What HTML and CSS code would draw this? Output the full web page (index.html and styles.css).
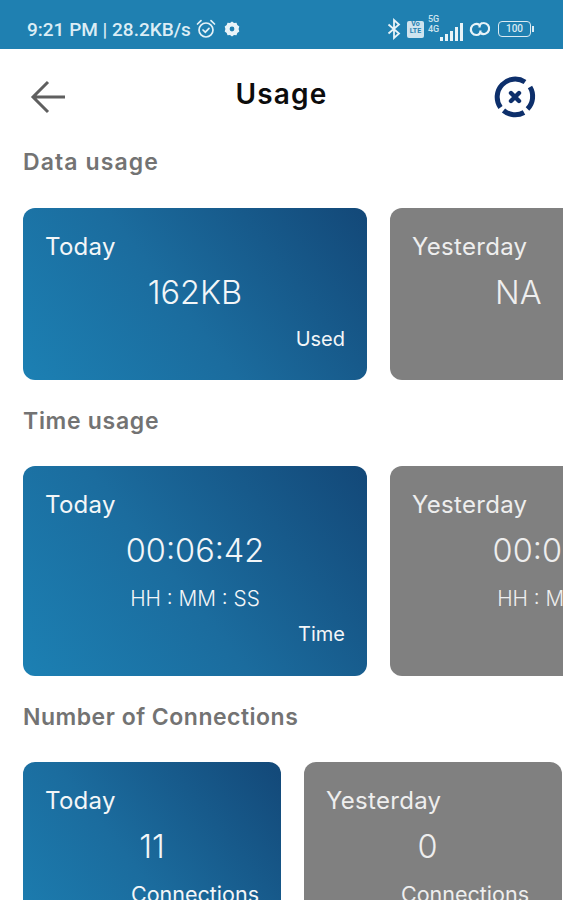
FILE: index.html
```html
<!DOCTYPE html>
<html lang="en">
<head>
<meta charset="utf-8">
<title>Usage</title>
<link rel="stylesheet" href="styles.css">
</head>
<body>
<div class="screen">
  <div class="status">
    <div class="status-left">
      <span class="status-text">9:21 PM | 28.2KB/s</span>
      <svg class="ic-alarm" width="22" height="22" viewBox="0 0 22 22" fill="none" stroke="#e4f1f7" stroke-width="1.7"><circle cx="11" cy="12" r="7"/><path d="M2.500 6 6 2.600M19.500 6 16 2.600M8 12l2.300 2.200L14 10.400" stroke-linecap="round"/></svg>
      <svg class="ic-gear" width="16" height="16" viewBox="0 0 16 16"><path fill="#e8f3f8" fill-rule="evenodd" d="M8 .6 10 2l2.500-.2.8 2.300 2 1.500L14.600 8l.7 2.400-2 1.500-.8 2.300L10 14 8 15.400 6 14l-2.500.2-.8-2.300-2-1.500L1.400 8 .7 5.600l2-1.500.8-2.300L6 2zM8 5.600a2.400 2.400 0 1 0 0 4.800 2.400 2.400 0 0 0 0-4.800z"/></svg>
    </div>
    <div class="status-right">
      <svg width="14" height="22" viewBox="0 0 14 22" fill="none" stroke="#e8f3f8" stroke-width="1.8"><path d="M1.500 6.500 12 15.500 7 20V2l5 4.500L1.500 15.500"/></svg>
      <span class="volte">Vo<br>LTE</span>
      <div class="signal">
        <span class="net">5G<br>4G</span>
        <i class="b1"></i><i class="b2"></i><i class="b3"></i><i class="b4"></i><i class="b5"></i>
      </div>
      <svg width="22" height="18" viewBox="0 0 22 18" fill="none" stroke="#e8f3f8" stroke-width="2.200"><path d="M10.500 5A5.500 5.500 0 1 0 7.500 15c2.500 0 4-2 4-4.500"/><path d="M11.500 13A5.500 5.500 0 1 0 14.500 3c-2.500 0-4 2-4 4.500"/></svg>
      <div class="battery"><span class="battery-body">100</span><span class="battery-tip"></span></div>
    </div>
  </div>

  <header class="topbar">
    <svg class="back" width="36" height="34" viewBox="0 0 36 34" fill="none" stroke="#5f5f5f" stroke-width="3"><path d="M35 17H3M18 2 3 17l15 15"/></svg>
    <h1 class="title">Usage</h1>
    <svg class="logo" width="42" height="42" viewBox="0 0 42 42" fill="none" stroke="#0d2f6b"><path d="M31 6A18 18 0 0 0 6.500 31.500" stroke-width="5"/><path d="M9.500 34.500A18 18 0 0 0 30 36.500" stroke-width="5"/><path d="M33.500 33A18 18 0 0 0 36 11" stroke-width="5"/><path d="M17 17l8 8M25 17l-8 8" stroke-width="4.400" stroke-linecap="round"/></svg>
  </header>

  <section class="group group-data">
    <h2 class="group-title">Data usage</h2>
    <div class="row">
      <div class="card card-blue card-wide card-short">
        <div class="card-day">Today</div>
        <div class="card-value">162KB</div>
        <div class="card-foot">Used</div>
      </div>
      <div class="card card-grey card-wide card-short">
        <div class="card-day">Yesterday</div>
        <div class="card-value card-value-offset">NA</div>
      </div>
    </div>
  </section>

  <section class="group group-time">
    <h2 class="group-title">Time usage</h2>
    <div class="row">
      <div class="card card-blue card-wide card-tall">
        <div class="card-day">Today</div>
        <div class="card-value">00:06:42</div>
        <div class="card-unit">HH : MM : SS</div>
        <div class="card-foot">Time</div>
      </div>
      <div class="card card-grey card-wide card-tall">
        <div class="card-day">Yesterday</div>
        <div class="card-value">00:00:00</div>
        <div class="card-unit">HH : MM : SS</div>
      </div>
    </div>
  </section>

  <section class="group group-conn">
    <h2 class="group-title">Number of Connections</h2>
    <div class="row">
      <div class="card card-blue card-narrow">
        <div class="card-day">Today</div>
        <div class="card-value">11</div>
        <div class="card-conn">Connections</div>
      </div>
      <div class="card card-grey card-narrow card-narrow-alt">
        <div class="card-day">Yesterday</div>
        <div class="card-value">0</div>
        <div class="card-conn">Connections</div>
      </div>
    </div>
  </section>
</div>
</body>
</html>
```
FILE: styles.css
```css
* { box-sizing: border-box; }
html, body { margin: 0; padding: 0; }
body { background: #fff; font-family: "Inter", "Liberation Sans", sans-serif; }
.screen { width: 563px; height: 900px; overflow: hidden; background: #fff; }

.status { height: 49px; background: #1f80b1; display: flex; justify-content: space-between; align-items: center; padding: 9px 29px 0 27px; color: #e8f3f8; }
.status-left { display: flex; align-items: center; }
.status-text { font-family: "Roboto", sans-serif; font-size: 19px; font-weight: 500; white-space: nowrap; margin-right: 4px; color: #dcedf5; }
.ic-alarm { margin-right: 7px; }
.status-right { display: flex; align-items: center; gap: 3px; }
.volte { width: 17px; height: 17px; background: #cfe4ef; color: #1f80b1; font: 700 7px/7.500px "Roboto", sans-serif; text-align: center; border-radius: 2px; margin-left: 3px; }
.signal { width: 36px; height: 24px; display: flex; align-items: flex-end; gap: 2px; position: relative; justify-content: flex-end; margin-right: 3px; }
.signal i { display: block; width: 3px; background: #e8f3f8; }
.signal .b1 { height: 4px; } .signal .b2 { height: 7px; } .signal .b3 { height: 10px; } .signal .b4 { height: 14px; } .signal .b5 { height: 18px; }
.net { position: absolute; left: 1px; top: -3px; font: 500 9px/10px "Roboto", sans-serif; color: #cfe4ef; }
.battery { display: flex; align-items: center; margin-left: 4px; }
.battery-body { width: 33px; height: 16px; border: 1.500px solid #dbeaf2; border-radius: 4px; font: 500 10px/13px "Roboto", sans-serif; text-align: center; color: #dbeaf2; }
.battery-tip { width: 2px; height: 6px; background: #dbeaf2; margin-left: 1px; }

.topbar { height: 87px; display: flex; align-items: center; justify-content: space-between; padding: 9px 27px 0 30px; position: relative; }
.title { margin: 0; font-size: 28px; line-height: 34px; font-weight: 600; letter-spacing: 1.2px; color: #0c0c0c; position: absolute; left: 0; right: 0; top: 28px; text-align: center; }

.group { padding-left: 23px; }
.group-title { margin: 0; font-size: 23px; line-height: 30px; font-weight: 600; letter-spacing: 0.5px; color: #737373; }
.row { display: flex; gap: 23px; margin-top: 30px; }
.group-data .group-title { margin-top: 11px; letter-spacing: 1.1px; }
.group-data .row { margin-top: 31px; }
.group-time .group-title { letter-spacing: 0.7px; }
.group-time { margin-top: 26px; }
.group-conn { margin-top: 26px; }

.card { flex: none; border-radius: 12px; padding: 24px 22px 0 22px; color: #f3f6f8; overflow: hidden; }
.card-blue { background: linear-gradient(52deg, #1c80b3 0%, #1b6c9e 45%, #134878 100%); }
.card-grey { background: #808080; color: #eeeeee; }
.card-wide { width: 344px; }
.card-short { height: 172px; }
.card-tall { height: 210px; }
.card-narrow { width: 258px; height: 200px; }
.card-narrow-alt { padding-right: 33px; }
.card-day { font-size: 24px; line-height: 30px; font-weight: 400; letter-spacing: 0.3px; }
.card-value { font-size: 32.500px; line-height: 40px; font-weight: 300; text-align: center; margin-top: 11px; white-space: nowrap; }
.card-value-offset { text-align: left; padding-left: 83px; }
.card-unit { font-size: 20.800px; line-height: 28px; font-weight: 300; text-align: center; margin-top: 14px; white-space: nowrap; }
.card-foot { font-size: 20px; line-height: 28px; text-align: right; margin-top: 7px; }
.group-data .card-foot { margin-top: 12px; }
.card-conn { font-size: 21.500px; line-height: 28px; text-align: right; margin-top: 13px; white-space: nowrap; }
```
